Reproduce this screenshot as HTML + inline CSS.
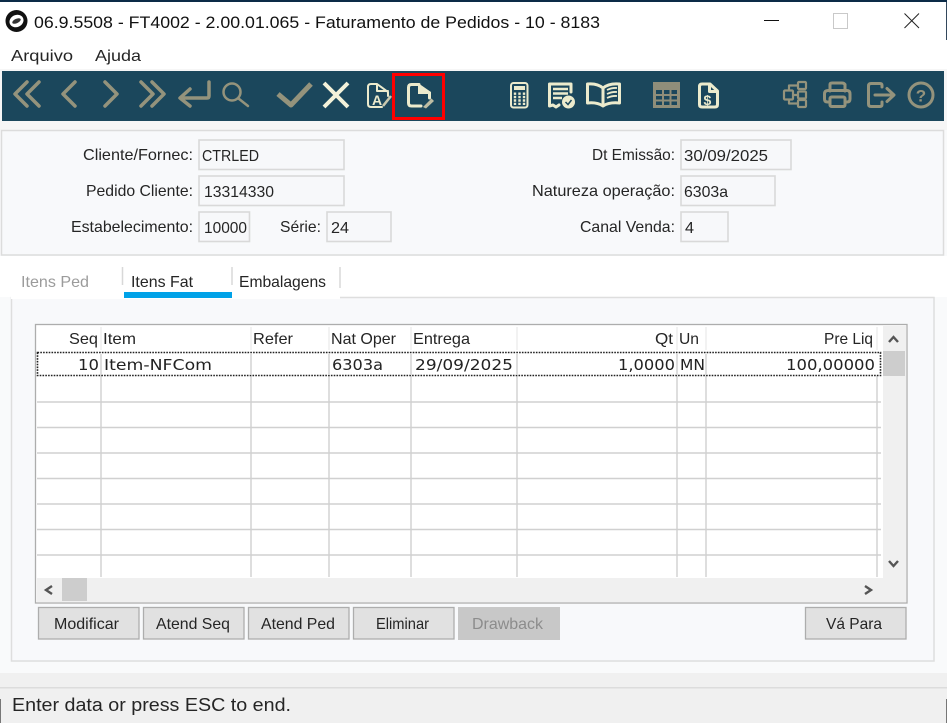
<!DOCTYPE html>
<html lang="pt">
<head>
<meta charset="utf-8">
<title>Faturamento de Pedidos</title>
<style>
html,body{margin:0;padding:0;width:947px;height:723px;overflow:hidden;background:#fff}
svg{display:block}
text{font-family:"Liberation Sans",sans-serif;font-size:16px;fill:#252525}
.m{font-family:"DejaVu Sans",sans-serif;font-size:15px;fill:#222}
.d{fill:none;stroke:#94937c;stroke-width:3;stroke-linecap:round;stroke-linejoin:round}
.b{fill:none;stroke:#ecebcd;stroke-width:2.4;stroke-linecap:round;stroke-linejoin:round}
.inp{fill:#f7f8fa;stroke:#d9d9d9;stroke-width:1.6}
.btn{fill:#e1e1e1;stroke:#adadad;stroke-width:1.3}
.g{stroke:#d0d0d0;stroke-width:1.4}
</style>
</head>
<body>
<svg width="947" height="723" viewBox="0 0 947 723" xmlns="http://www.w3.org/2000/svg">
<rect width="947" height="723" fill="#f9fafb"/>
<!-- title bar -->
<rect x="0" y="0" width="947" height="70" fill="#fff"/>
<rect x="0" y="0" width="947" height="2" fill="#0c2b47"/>
<rect x="946" y="2" width="1" height="38" fill="#33475c"/>
<circle cx="16.500" cy="21" r="11" fill="#111"/>
<ellipse cx="16.500" cy="21" rx="7.200" ry="6" transform="rotate(-25 16.500 21)" fill="#fff"/>
<ellipse cx="16.500" cy="21" rx="4.600" ry="2.200" transform="rotate(-25 16.500 21)" fill="#333"/>
<text x="34" y="28" textLength="566" lengthAdjust="spacingAndGlyphs" style="font-size:16.5px;fill:#111">06.9.5508 - FT4002 - 2.00.01.065 - Faturamento de Pedidos - 10 - 8183</text>
<rect x="764" y="20" width="15" height="1" fill="#111"/>
<rect x="833.500" y="13.500" width="14" height="15" fill="none" stroke="#c9c9c9"/>
<path d="M904.500 13.500 L919 28 M919 13.500 L904.500 28" stroke="#222" stroke-width="1" fill="none"/>
<text x="11" y="61" textLength="62" lengthAdjust="spacingAndGlyphs">Arquivo</text>
<text x="95" y="61" textLength="46" lengthAdjust="spacingAndGlyphs">Ajuda</text>

<!-- toolbar -->
<rect x="0" y="69" width="947" height="61" fill="#f6f6f6"/>
<rect x="2" y="71" width="942" height="50" fill="#1b475c"/>
<polyline class="d" style="stroke-width:3.5" points="27,82 15,94 27,106"/>
<polyline class="d" style="stroke-width:3.5" points="39,82 27,94 39,106"/>
<polyline class="d" style="stroke-width:3.5" points="75,82 63,94 75,106"/>
<polyline class="d" style="stroke-width:3.5" points="105,82 117,94 105,106"/>
<polyline class="d" style="stroke-width:3.5" points="141,82 153,94 141,106"/>
<polyline class="d" style="stroke-width:3.5" points="152,82 164,94 152,106"/>
<path class="d" style="stroke-width:3.5" d="M209 82 V96 Q209 98 207 98 H181 M190 89 L180 98 L190 106"/>
<circle class="d" cx="232" cy="92" r="8.500" style="stroke-width:2.500"/>
<path class="d" style="stroke-width:2.500" d="M238.500 98.500 L248 106"/>
<polyline class="d" style="stroke-width:5;stroke-linecap:butt" points="278,94 291,105 311,84"/>
<path class="b" style="stroke-width:4;stroke-linecap:butt;stroke:#f3f2da" d="M324 83 L348 107 M348 83 L324 107"/>
<!-- doc A -->
<path class="b" style="stroke-width:2" d="M377 84 H371 Q368 84 368 87 V104 Q368 107 371 107 H382 M377 84 L388 92 V96 M377 84 V91 H388"/>
<text x="372" y="105" style="font-size:14px;font-weight:bold;fill:#ecebcd">A</text>
<path d="M383 106 L391 96" stroke="#c9c8ae" stroke-width="2.600" fill="none"/>
<!-- doc edit -->
<path class="b" style="stroke-width:3" d="M419 84.500 H411.500 Q408.500 84.500 408.500 87.500 V103 Q408.500 106 411.500 106 H421 M429.500 93 V98"/>
<path d="M418 83 L431 92 V94 H418 Z" fill="#ecebcd"/>
<path d="M423 107 L431.500 98.500 L434 101 L426 108.500 Z" fill="#bdbca3"/>

<!-- calculator -->
<rect class="b" x="511" y="83" width="16.500" height="24.500" rx="2.500" style="stroke-width:2"/>
<rect x="514" y="86" width="11" height="4" fill="#ecebcd"/>
<path d="M515 92.500 V105 M519.500 92.500 V105 M524 92.500 V105" stroke="#ecebcd" stroke-width="2.400" stroke-dasharray="2.400 1"/>
<!-- doc list check -->
<path class="b" style="stroke-width:3" d="M571 92 V84 H549.500 V106 L553 105 L556 107 L559 105"/>
<path class="b" style="stroke-width:2.400;stroke-linecap:butt" d="M553 89 H568 M553 93.500 H568 M553 98 H562"/>
<circle cx="568.500" cy="102" r="6.500" fill="#ecebcd"/>
<path d="M565.500 102 L568 104.500 L571.500 100" stroke="#1b475c" stroke-width="1.500" fill="none"/>
<!-- book -->
<path class="b" style="stroke-width:3" d="M603 88 Q597 83 587.500 84 V103 Q597 102 603 106 Q609 102 619.500 103 V84 Q609 83 603 88 V105"/>
<path class="b" style="stroke-width:1.800;stroke-linecap:butt" d="M607 90 Q612 87.500 617 88 M607 94 Q612 91.500 617 92 M607 98 Q612 95.500 617 96"/>
<!-- table -->
<rect x="653" y="82" width="27" height="26" fill="#8f8e7a"/>
<g fill="#1b475c">
<rect x="656" y="90" width="6" height="4"/><rect x="664" y="90" width="5.500" height="4"/><rect x="671.500" y="90" width="5.500" height="4"/>
<rect x="656" y="96" width="6" height="3.500"/><rect x="664" y="96" width="5.500" height="3.500"/><rect x="671.500" y="96" width="5.500" height="3.500"/>
<rect x="656" y="101.500" width="6" height="3.500"/><rect x="664" y="101.500" width="5.500" height="3.500"/><rect x="671.500" y="101.500" width="5.500" height="3.500"/>
</g>
<!-- dollar doc -->
<path class="b" style="stroke-width:3" d="M710 84 H702 Q699.500 84 699.500 86.500 V104.500 Q699.500 107 702 107 H715 Q717.500 107 717.500 104.500 V91 Z M709.500 84.500 V91.500 H717"/>
<text x="703.500" y="105" style="font-size:14px;font-weight:bold;fill:#ecebcd">$</text>
<!-- org chart -->
<g class="d" style="stroke-width:2.200;stroke-linecap:butt">
<rect x="784" y="90.500" width="9" height="9" rx="1"/>
<rect x="798" y="82" width="8" height="7" rx="1"/>
<rect x="798" y="91.500" width="8" height="7" rx="1"/>
<rect x="798" y="100" width="8" height="7" rx="1"/>
<path d="M793 95 H798 M789 90.500 V85.500 H798 M789 99.500 V103.500 H798"/>
</g>
<!-- printer -->
<path class="d" d="M830 91 V84.500 Q830 83 832 83 H842 Q844 83 845 84.500 V91 M830 102 H827.500 Q824.500 102 824.500 99 V94 Q824.500 90.500 828 90.500 H847 Q850 90.500 850 94 V99 Q850 102 847 102 H845"/>
<rect class="d" x="830" y="97" width="15" height="9.500" rx="1.500"/>
<!-- exit -->
<path class="d" d="M882 87 V85.500 Q882 83.500 880 83.500 H871 Q868.500 83.500 868.500 86 V104 Q868.500 106.500 871 106.500 H880 Q882 106.500 882 104.500 V102"/>
<path class="d" d="M875 95 H893 M887 88.500 L894 95 L887 101.500"/>
<!-- help -->
<circle class="d" cx="921" cy="95" r="12"/>
<text x="921" y="101.500" text-anchor="middle" style="font-size:17px;font-weight:bold;fill:#94937c">?</text>
<!-- highlight -->
<rect x="393.500" y="74.500" width="50" height="44" fill="none" stroke="#f00" stroke-width="3"/>

<!-- header panel -->
<rect x="1.500" y="130.500" width="942" height="124.500" fill="#f8f9fb" stroke="#dcdcdc" stroke-width="1.500"/>
<text x="83" y="160" textLength="110" lengthAdjust="spacingAndGlyphs">Cliente/Fornec:</text>
<text x="86" y="196" textLength="107" lengthAdjust="spacingAndGlyphs">Pedido Cliente:</text>
<text x="71" y="232" textLength="122" lengthAdjust="spacingAndGlyphs">Estabelecimento:</text>
<text x="280" y="232" textLength="41" lengthAdjust="spacingAndGlyphs">Série:</text>
<text x="592" y="160" textLength="83" lengthAdjust="spacingAndGlyphs">Dt Emissão:</text>
<text x="532" y="196" textLength="143" lengthAdjust="spacingAndGlyphs">Natureza operação:</text>
<text x="580" y="232" textLength="95" lengthAdjust="spacingAndGlyphs">Canal Venda:</text>
<rect class="inp" x="199" y="140" width="145" height="29.500"/>
<rect class="inp" x="199" y="176" width="145" height="29.500"/>
<rect class="inp" x="199" y="212" width="50.500" height="29.500"/>
<rect class="inp" x="327" y="212" width="64" height="29.500"/>
<rect class="inp" x="681" y="140" width="110" height="29.500"/>
<rect class="inp" x="681" y="176" width="94" height="29.500"/>
<rect class="inp" x="681" y="212" width="47" height="29.500"/>
<text x="202" y="161" textLength="57" lengthAdjust="spacingAndGlyphs">CTRLED</text>
<text x="204" y="197" textLength="70" lengthAdjust="spacingAndGlyphs">13314330</text>
<text x="204" y="233" textLength="43" lengthAdjust="spacingAndGlyphs">10000</text>
<text x="331" y="233" textLength="18" lengthAdjust="spacingAndGlyphs">24</text>
<text x="684" y="161" textLength="84" lengthAdjust="spacingAndGlyphs">30/09/2025</text>
<text x="684" y="197" textLength="44" lengthAdjust="spacingAndGlyphs">6303a</text>
<text x="685" y="233" textLength="9" lengthAdjust="spacingAndGlyphs">4</text>

<!-- tabs -->
<rect x="0" y="256" width="947" height="41" fill="#fff"/>
<rect x="11.500" y="297.500" width="922.500" height="363.500" fill="#f8f9fb" stroke="#dedede" stroke-width="1.500"/>
<rect x="11" y="296" width="329" height="3" fill="#fff"/>
<rect x="124" y="292" width="108" height="6" fill="#00a2e8"/>
<path d="M122.500 267 V285 M232 267 V285 M340 267 V288" stroke="#d8d8d8" stroke-width="1.500"/>
<text x="21" y="287" textLength="68" lengthAdjust="spacingAndGlyphs" style="fill:#9b9b9b">Itens Ped</text>
<text x="131" y="287" textLength="62" lengthAdjust="spacingAndGlyphs">Itens Fat</text>
<text x="239" y="287" textLength="87" lengthAdjust="spacingAndGlyphs">Embalagens</text>

<!-- grid -->
<rect x="35.500" y="324.500" width="871.500" height="278.500" fill="#fff" stroke="#adadad" stroke-width="1.300"/>
<g class="g">
<path d="M37 402 H881 M37 427.500 H881 M37 453 H881 M37 478.500 H881 M37 504 H881 M37 529.500 H881 M37 555 H881" fill="none"/>
<path d="M101 352 V577 M251 352 V577 M329 352 V577 M411 352 V577 M517 352 V577 M677 352 V577 M706 352 V577 M877 352 V577" fill="none"/>
<path d="M101 327 V350 M251 327 V350 M329 327 V350 M411 327 V350 M517 327 V350 M677 327 V350 M706 327 V350 M877 327 V350" fill="none" style="stroke:#ececec"/>
</g>
<rect x="37.500" y="352.500" width="843" height="23" fill="#fff" stroke="#222" stroke-width="1.600" stroke-dasharray="1.600 1.200"/>
<path d="M101 354 V375 M251 354 V375 M329 354 V375 M411 354 V375 M517 354 V375 M677 354 V375 M706 354 V375" stroke="#d0d0d0" stroke-width="1.400"/>
<rect x="883" y="326" width="23" height="252" fill="#f0f0f0"/>
<rect x="883" y="351" width="22" height="25" fill="#cdcdcd"/>
<rect x="37" y="578" width="869" height="24" fill="#f0f0f0"/>
<rect x="62" y="578" width="25" height="23" fill="#cdcdcd"/>
<g fill="none" stroke="#555" stroke-width="2.400">
<polyline points="889,342 893.500,337 898,342"/>
<polyline points="889,561 893.500,566 898,561"/>
<polyline points="52,586 46,590 52,594"/>
<polyline points="865,586 871,590 865,594"/>
</g>
<text x="69" y="344" textLength="29" lengthAdjust="spacingAndGlyphs">Seq</text>
<text x="103" y="344" textLength="33" lengthAdjust="spacingAndGlyphs">Item</text>
<text x="253" y="344" textLength="40" lengthAdjust="spacingAndGlyphs">Refer</text>
<text x="331" y="344" textLength="65" lengthAdjust="spacingAndGlyphs">Nat Oper</text>
<text x="413" y="344" textLength="57" lengthAdjust="spacingAndGlyphs">Entrega</text>
<text x="655" y="344" textLength="18" lengthAdjust="spacingAndGlyphs">Qt</text>
<text x="679" y="344" textLength="20" lengthAdjust="spacingAndGlyphs">Un</text>
<text x="824" y="344" textLength="49" lengthAdjust="spacingAndGlyphs">Pre Liq</text>
<text class="m" x="78" y="370" textLength="21" lengthAdjust="spacingAndGlyphs">10</text>
<text class="m" x="104" y="370" textLength="108" lengthAdjust="spacingAndGlyphs">Item-NFCom</text>
<text class="m" x="332" y="370" textLength="51" lengthAdjust="spacingAndGlyphs">6303a</text>
<text class="m" x="415" y="370" textLength="98" lengthAdjust="spacingAndGlyphs">29/09/2025</text>
<text class="m" x="618" y="370" textLength="57" lengthAdjust="spacingAndGlyphs">1,0000</text>
<text class="m" x="680" y="370" textLength="25" lengthAdjust="spacingAndGlyphs">MN</text>
<text class="m" x="786" y="370" textLength="89" lengthAdjust="spacingAndGlyphs">100,00000</text>

<!-- buttons -->
<rect class="btn" x="38.500" y="607.500" width="100.500" height="31.500"/>
<rect class="btn" x="143.500" y="607.500" width="100.500" height="31.500"/>
<rect class="btn" x="248.500" y="607.500" width="100.500" height="31.500"/>
<rect class="btn" x="353.500" y="607.500" width="100.500" height="31.500"/>
<rect x="458" y="607" width="102" height="33" fill="#c8c8c8"/>
<rect class="btn" x="805.500" y="607.500" width="100.500" height="31.500"/>
<text x="54" y="629" textLength="65" lengthAdjust="spacingAndGlyphs">Modificar</text>
<text x="156" y="629" textLength="74" lengthAdjust="spacingAndGlyphs">Atend Seq</text>
<text x="261" y="629" textLength="74" lengthAdjust="spacingAndGlyphs">Atend Ped</text>
<text x="376" y="629" textLength="53" lengthAdjust="spacingAndGlyphs">Eliminar</text>
<text x="472" y="629" textLength="71" lengthAdjust="spacingAndGlyphs" style="fill:#8c8c8c">Drawback</text>
<text x="826" y="629" textLength="56" lengthAdjust="spacingAndGlyphs">Vá Para</text>

<!-- status -->
<rect x="0" y="673" width="947" height="50" fill="#f0f0f0"/>
<rect x="0" y="687" width="947" height="1.500" fill="#dcdcdc"/>
<rect x="0" y="699" width="1" height="24" fill="#777"/>
<rect x="946" y="699" width="1" height="24" fill="#777"/>
<text x="12" y="711" textLength="279" lengthAdjust="spacingAndGlyphs" style="font-size:18px">Enter data or press ESC to end.</text>
</svg>
</body>
</html>
